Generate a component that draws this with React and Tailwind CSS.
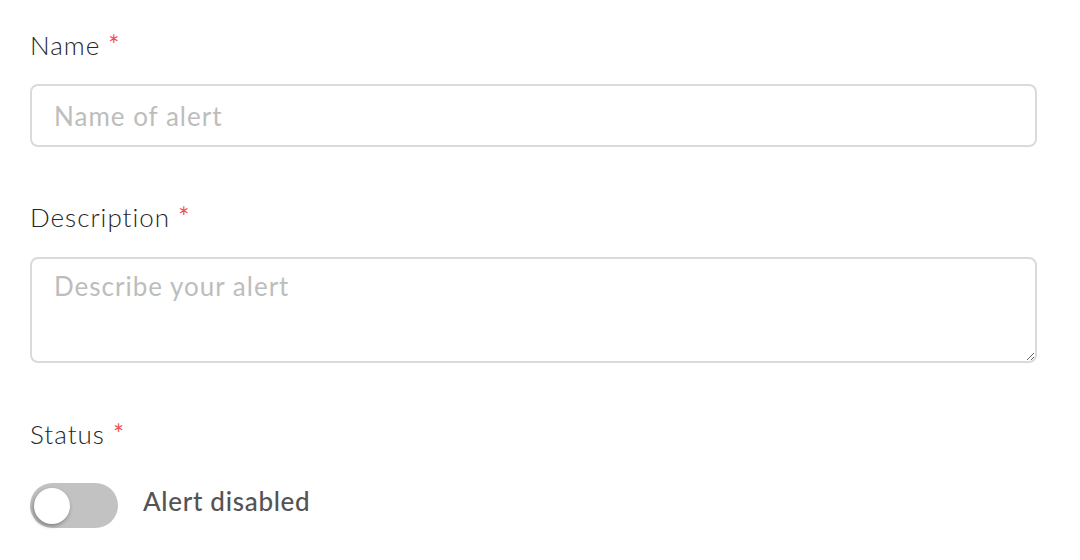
export default function App() {
  return (
    <div
      className="w-[1080px] h-[560px] bg-white pl-[30px] pr-[43px] pt-[30px]"
      style={{ fontFamily: "Lato, 'Noto Sans', sans-serif" }}
    >
      <div className="flex flex-col">
        <label className="text-[26px] leading-[31px] font-light tracking-[1px] text-[#262626]">
          Name <span className="text-[#ec5050] font-normal">*</span>
        </label>
        <input
          className="mt-[23px] h-[63px] w-full rounded-[8px] border-2 border-[#dadada] px-[22px] text-[26px] tracking-[1px] outline-none placeholder:text-[#bdbdbd]"
          placeholder="Name of alert"
          style={{ fontFamily: "Lato, 'Noto Sans', sans-serif" }}
        />
        <label className="mt-[55px] text-[26px] leading-[31px] font-light tracking-[1px] text-[#262626]">
          Description <span className="text-[#ec5050] font-normal">*</span>
        </label>
        <textarea
          className="mt-[24px] h-[106px] w-full rounded-[8px] border-2 border-[#dadada] px-[22px] pt-[12px] text-[26px] leading-[31px] tracking-[1px] outline-none placeholder:text-[#bdbdbd] resize-y"
          placeholder="Describe your alert"
          style={{ fontFamily: "Lato, 'Noto Sans', sans-serif" }}
        />
        <label className="mt-[56px] text-[26px] leading-[31px] font-light tracking-[1px] text-[#262626]">
          Status <span className="text-[#ec5050] font-normal">*</span>
        </label>
        <div className="mt-[33px] flex items-center gap-[25px]">
          <div className="relative h-[45px] w-[88px] rounded-full bg-[#c2c2c2]">
            <div className="absolute left-[4px] top-[4.5px] h-[36px] w-[36px] rounded-full bg-white shadow-[-1px_2px_4px_rgba(0,0,0,0.35)]" />
          </div>
          <span className="mb-[8px] text-[26px] leading-[31px] font-medium tracking-[0.7px] text-[#545454]">
            Alert disabled
          </span>
        </div>
      </div>
    </div>
  );
}
